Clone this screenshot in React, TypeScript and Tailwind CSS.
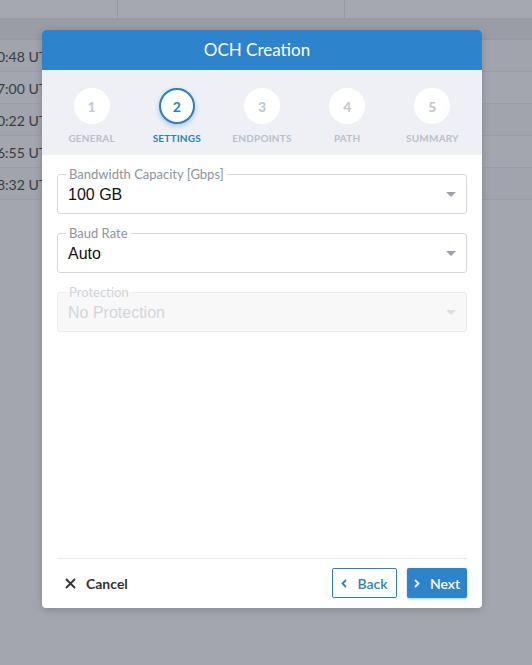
import React from "react";

const steps = ["GENERAL", "SETTINGS", "ENDPOINTS", "PATH", "SUMMARY"];
const times = ["0:48 UTC", "7:00 UTC", "0:22 UTC", "6:55 UTC", "8:32 UTC"];

function Caret({ color }: { color: string }) {
  return (
    <svg width="10" height="5" viewBox="0 0 10 5" className="shrink-0">
      <path d="M0 0 L10 0 L5 5 Z" fill={color} />
    </svg>
  );
}

function Field({ label, value, disabled }: { label: string; value: string; disabled?: boolean }) {
  return (
    <div
      className={
        "relative flex h-[40px] items-center justify-between rounded-[3px] border pl-[10px] pr-[10px] " +
        (disabled ? "border-[#ececee] bg-[#f8f8f9]" : "border-[#d6d8dc] bg-white")
      }
    >
      <span
        className={
          "absolute left-[8px] top-[-9px] bg-white px-[3px] text-[13px] leading-[16px] " +
          (disabled ? "text-[#d2d4d8]" : "text-[#8e939c]")
        }
        style={{
          fontFamily: "'Lato', 'Noto Sans', sans-serif",
          background: disabled ? "linear-gradient(#fff 50%, #f8f8f9 50%)" : "#fff",
        }}
      >
        {label}
      </span>
      <span
        className={"mt-[1px] text-[16px] " + (disabled ? "text-[#d3d5d9]" : "text-[#111]")}
        style={{ fontFamily: "'Liberation Sans', Arial, sans-serif" }}
      >
        {value}
      </span>
      <Caret color={disabled ? "#dcdee2" : "#9ea2aa"} />
    </div>
  );
}

export default function App() {
  return (
    <div
      className="relative h-[665px] w-[532px] overflow-hidden bg-[#a3a6ae]"
      style={{ fontFamily: "'Noto Sans', 'Open Sans', sans-serif" }}
    >
      {/* background table (dimmed) */}
      <div className="flex h-[19px] border-b border-[#979aa2] bg-[#a5a8b0]">
        <div className="w-[118px] border-r border-[#979aa2]" />
        <div className="w-[227px] border-r border-[#979aa2]" />
        <div className="flex-1" />
      </div>
      <div className="h-[21px] border-b border-[#979aa2] bg-[#9a9da5]" />
      {times.map((t, i) => (
        <div
          key={t}
          className={
            "flex h-[32px] items-center border-b border-[#9a9da5] pt-[2px] " +
            (i % 2 === 0 ? "bg-[#a1a4ac]" : "bg-[#a3a6ae]")
          }
        >
          <span
            className="ml-[-3px] text-[14px] text-[#383b42]"
            style={{ fontFamily: "'Lato', sans-serif" }}
          >
            {t}
          </span>
        </div>
      ))}

      {/* modal */}
      <div
        className="absolute left-[42px] top-[30px] flex h-[578px] w-[440px] flex-col overflow-hidden rounded-[4px] bg-white shadow-[0_2px_8px_rgba(0,0,0,0.18)]"
        style={{ fontFamily: "'Lato', 'Noto Sans', sans-serif" }}
      >
        <div className="flex h-[40px] items-center justify-center bg-[#2d84cc] pr-[10px]">
          <span className="text-[17px] text-white">OCH Creation</span>
        </div>
        <div className="grid h-[85px] grid-cols-5 bg-[#eef0f5] px-[7px] pt-[18px]">
          {steps.map((s, i) => {
            const active = i === 1;
            return (
              <div key={s} className="flex flex-col items-center">
                <div
                  className={
                    "flex h-[36px] w-[36px] items-center justify-center rounded-full bg-white text-[14px] font-bold " +
                    (active
                      ? "border-2 border-[#2d7fc0] text-[#2d7fc0] shadow-[0_2px_5px_rgba(45,127,192,0.35)]"
                      : "text-[#c1c5cd]")
                  }
                >
                  {i + 1}
                </div>
                <span
                  className={
                    "mt-[7px] text-[10px] font-bold leading-[15px] tracking-[0.2px] " +
                    (active ? "text-[#2d7fc0]" : "text-[#bbbfc8]")
                  }
                >
                  {s}
                </span>
              </div>
            );
          })}
        </div>
        <div className="flex flex-1 flex-col px-[15px] pt-[19px]">
          <div className="flex flex-col gap-[19px]">
            <Field label="Bandwidth Capacity [Gbps]" value="100 GB" />
            <Field label="Baud Rate" value="Auto" />
            <Field label="Protection" value="No Protection" disabled />
          </div>
          <div className="mt-auto flex h-[50px] items-center justify-between border-t border-[#e8e9ec] pb-[1px]">
            <button className="ml-[8px] flex items-center gap-[10px] text-[14px] font-bold text-[#333]">
              <svg width="11" height="11" viewBox="0 0 11 11">
                <path d="M1 1 L10 10 M10 1 L1 10" stroke="#333" strokeWidth="1.8" />
              </svg>
              Cancel
            </button>
            <div className="flex items-center gap-[10px]">
              <button className="flex h-[30px] w-[65px] items-center justify-center gap-[10px] rounded-[2px] border border-[#2d7fc0] text-[14px] font-semibold text-[#2d7fc0]">
                <svg width="6" height="9" viewBox="0 0 6 9">
                  <path d="M5 1 L1.5 4.5 L5 8" stroke="#2d7fc0" strokeWidth="1.8" fill="none" />
                </svg>
                Back
              </button>
              <button className="flex h-[30px] w-[60px] items-center justify-center gap-[10px] rounded-[2px] bg-[#2d84cc] text-[14px] font-semibold text-white shadow-[0_1px_3px_rgba(45,127,192,0.4)]">
                <svg width="6" height="9" viewBox="0 0 6 9">
                  <path d="M1 1 L4.5 4.5 L1 8" stroke="#fff" strokeWidth="1.8" fill="none" />
                </svg>
                Next
              </button>
            </div>
          </div>
        </div>
      </div>
    </div>
  );
}
